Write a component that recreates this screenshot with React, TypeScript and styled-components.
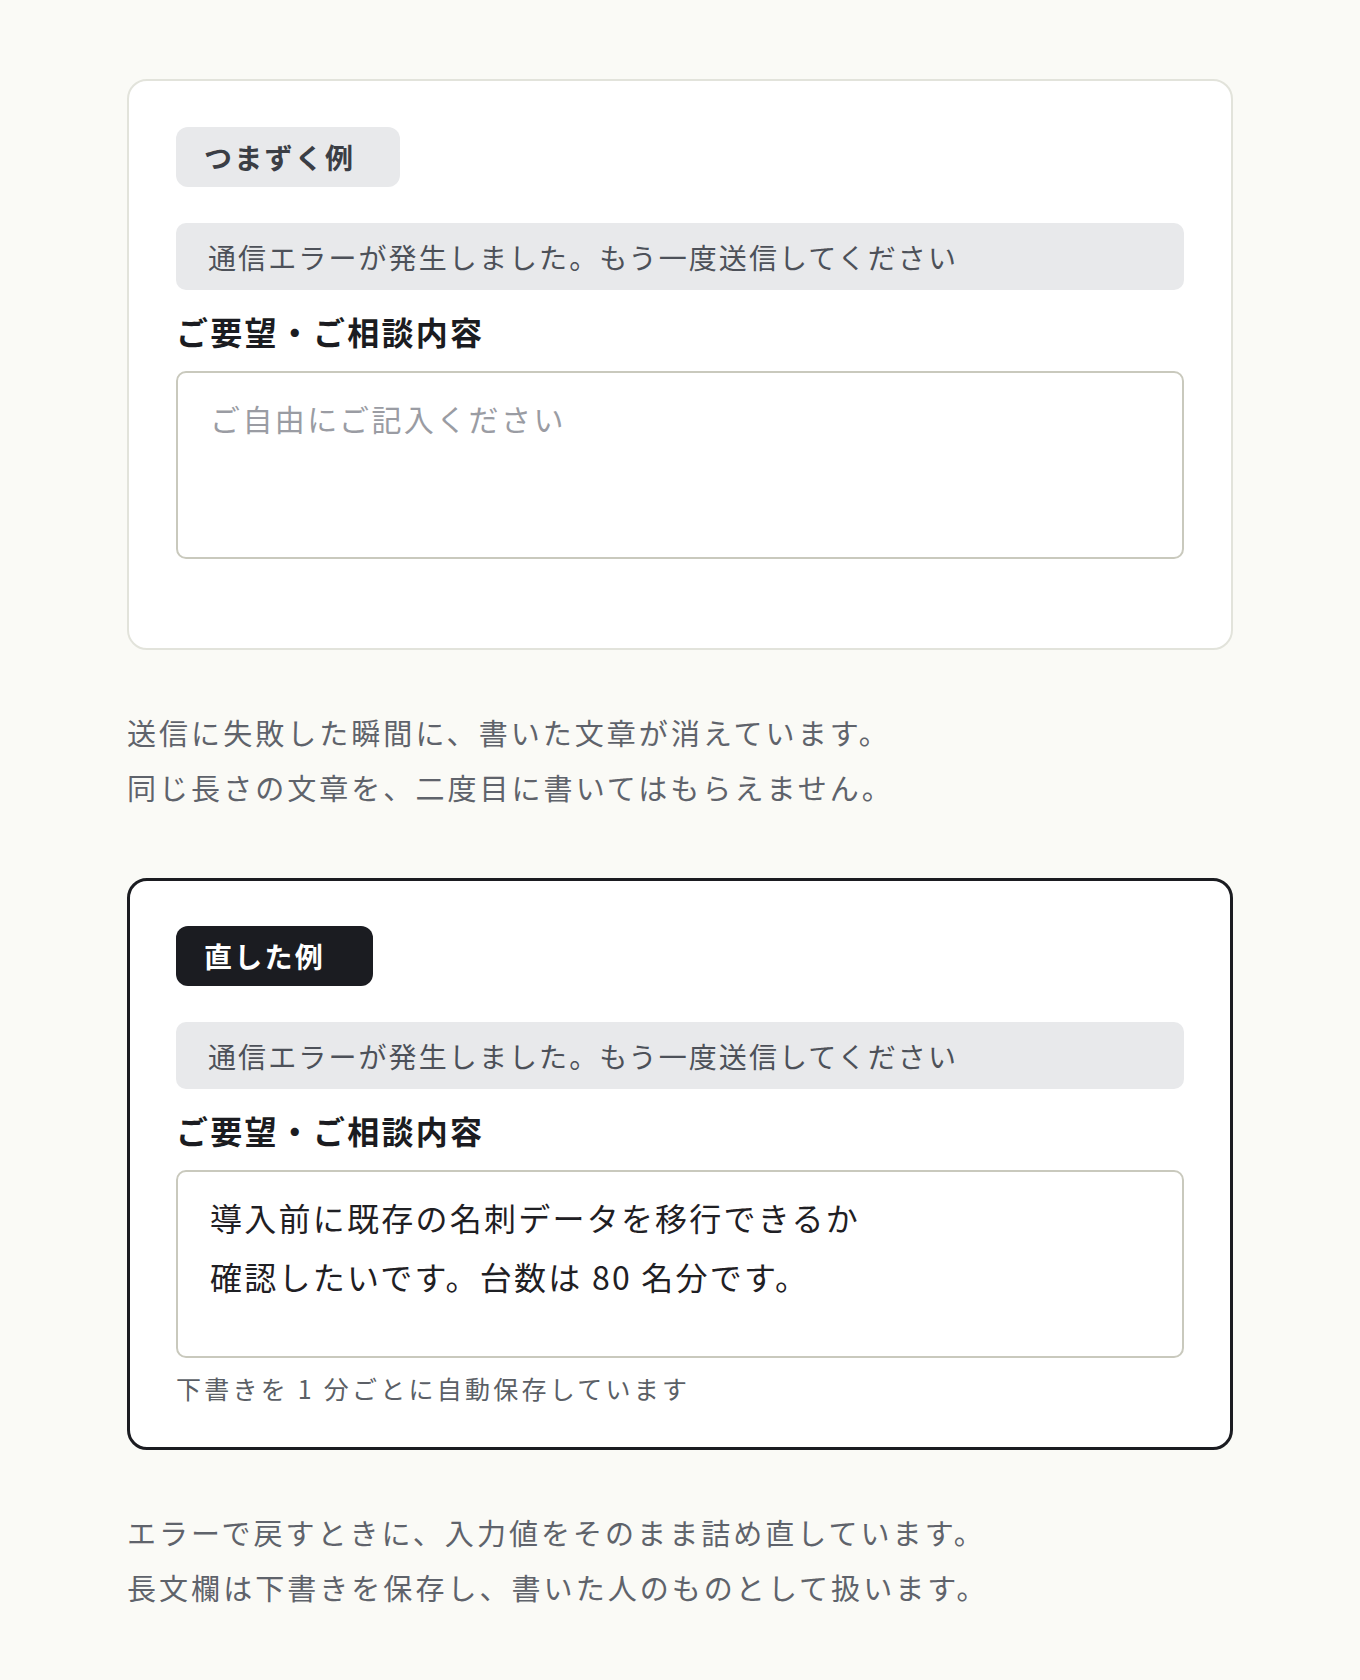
import React from "react";
import styled, { createGlobalStyle } from "styled-components";

const GlobalStyle = createGlobalStyle`
  body {
    margin: 0;
    background: #fafaf6;
    font-family: "Noto Sans CJK JP", "Noto Sans", sans-serif;
  }
`;

const Page = styled.main`
  width: 1106px;
  margin: 0 auto;
  padding: 79px 0 40px;
`;

const Card = styled.section<{ $fixed?: boolean }>`
  box-sizing: border-box;
  background: #ffffff;
  border-radius: 20px;
  border: ${(p) => (p.$fixed ? "3px solid #1b1c21" : "2px solid #e2e3db")};
  padding: ${(p) => (p.$fixed ? "45px 46px 41px" : "46px 47px 41px")};
`;

const Tag = styled.div<{ $fixed?: boolean }>`
  display: inline-flex;
  align-items: center;
  height: 60px;
  padding: 0 ${(p) => (p.$fixed ? 48 : 45)}px 0 28px;
  border-radius: 12px;
  font-size: 28px;
  font-weight: 700;
  letter-spacing: 0.08em;
  background: ${(p) => (p.$fixed ? "#1b1c21" : "#e8e9eb")};
  color: ${(p) => (p.$fixed ? "#ffffff" : "#3b3e45")};
`;

const ErrorBar = styled.div`
  margin-top: 36px;
  height: 67px;
  display: flex;
  align-items: center;
  padding-left: 32px;
  border-radius: 10px;
  background: #e8e9eb;
  color: #4d5159;
  font-size: 28px;
  letter-spacing: 0.075em;
`;

const Label = styled.div`
  margin-top: 17px;
  font-size: 32px;
  line-height: 48px;
  font-weight: 700;
  letter-spacing: 0.07em;
  color: #1b1c21;
`;

const TextArea = styled.textarea`
  display: block;
  box-sizing: border-box;
  width: 100%;
  height: 188px;
  margin-top: 16px;
  padding: 16px 32px;
  border: 2px solid #c9c9bd;
  border-radius: 10px;
  background: #ffffff;
  resize: none;
  overflow: hidden;
  outline: none;
  font-family: "Noto Sans CJK JP", "Noto Sans", sans-serif;
  font-size: 32px;
  line-height: 59px;
  letter-spacing: 0.07em;
  color: #1f2024;
  &::placeholder {
    font-size: 30px;
    letter-spacing: 0.08em;
    color: #9a9ca3;
  }
`;

const Hint = styled.div<{ $hidden?: boolean }>`
  margin-top: 12px;
  height: 36px;
  line-height: 36px;
  font-size: 25px;
  letter-spacing: 0.13em;
  color: #5b5f66;
  visibility: ${(p) => (p.$hidden ? "hidden" : "visible")};
`;

const Note = styled.p`
  margin: 55px 0 63px;
  font-size: 29px;
  line-height: 55px;
  letter-spacing: 0.105em;
  color: #5f636b;
`;

function FormExample({ fixed }: { fixed?: boolean }) {
  return (
    <Card $fixed={fixed}>
      <Tag $fixed={fixed}>{fixed ? "直した例" : "つまずく例"}</Tag>
      <ErrorBar>通信エラーが発生しました。もう一度送信してください</ErrorBar>
      <Label>ご要望・ご相談内容</Label>
      {fixed ? (
        <TextArea
          readOnly
          defaultValue={"導入前に既存の名刺データを移行できるか\n確認したいです。台数は 80 名分です。"}
        />
      ) : (
        <TextArea readOnly placeholder="ご自由にご記入ください" />
      )}
      <Hint $hidden={!fixed}>下書きを 1 分ごとに自動保存しています</Hint>
    </Card>
  );
}

export default function App() {
  return (
    <>
      <GlobalStyle />
      <Page>
        <FormExample />
        <Note>
          送信に失敗した瞬間に、書いた文章が消えています。
          <br />
          同じ長さの文章を、二度目に書いてはもらえません。
        </Note>
        <FormExample fixed />
        <Note>
          エラーで戻すときに、入力値をそのまま詰め直しています。
          <br />
          長文欄は下書きを保存し、書いた人のものとして扱います。
        </Note>
      </Page>
    </>
  );
}
